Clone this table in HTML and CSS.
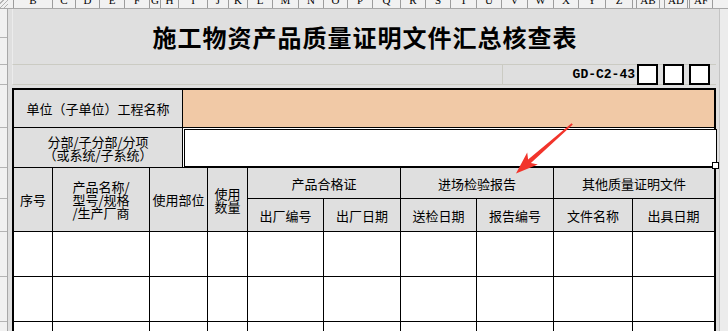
FILE: index.html
```html
<!DOCTYPE html>
<html lang="zh-CN">
<head>
<meta charset="utf-8">
<title>施工物资产品质量证明文件汇总核查表</title>
<link rel="stylesheet" href="styles.css">
</head>
<body>
<div class="colhead">
  <div class="corner"></div>
  <div class="ch"><span>B</span></div>
  <div class="ch"><span>C</span></div>
  <div class="ch"><span>D</span></div>
  <div class="ch"><span>E</span></div>
  <div class="ch"><span>F</span></div>
  <div class="ch"><span>G</span></div>
  <div class="ch"><span>H</span></div>
  <div class="ch"><span>I</span></div>
  <div class="ch"><span>J</span></div>
  <div class="ch"><span>K</span></div>
  <div class="ch"><span>L</span></div>
  <div class="ch"><span>M</span></div>
  <div class="ch"><span>N</span></div>
  <div class="ch"><span>O</span></div>
  <div class="ch"><span>P</span></div>
  <div class="ch"><span>Q</span></div>
  <div class="ch"><span>R</span></div>
  <div class="ch"><span>S</span></div>
  <div class="ch"><span>T</span></div>
  <div class="ch"><span>U</span></div>
  <div class="ch"><span>V</span></div>
  <div class="ch"><span>W</span></div>
  <div class="ch"><span>X</span></div>
  <div class="ch"><span>Y</span></div>
  <div class="ch"><span>Z</span></div>
  <div class="ch"></div>
  <div class="ch"><span>AB</span></div>
  <div class="ch"></div>
  <div class="ch"><span>AD</span></div>
  <div class="ch"></div>
  <div class="ch"><span>AF</span></div>
  <div class="ch last"></div>
</div>

<div class="main">
  <div class="rowhead">
    <div class="rh h29"></div>
    <div class="rh h27"></div>
    <div class="rh h20"></div>
    <div class="rh h43"></div>
    <div class="rh h40"></div>
    <div class="rh h31"></div>
    <div class="rh h33"></div>
    <div class="rh h45"></div>
    <div class="rh h45"></div>
    <div class="rh rest"></div>
  </div>

  <div class="sheet">
    <div class="title-row">
      <h1 class="title">施工物资产品质量证明文件汇总核查表</h1>
    </div>
    <div class="code-row">
      <div class="code-blank"></div>
      <div class="code">GD-C2-43</div>
      <div class="box"></div>
      <div class="box"></div>
      <div class="box"></div>
    </div>

    <div class="form">
      <div class="c hd s3">单位（子单位）工程名称</div>
      <div class="c fill s8 end"></div>

      <div class="c hd s3">分部/子分部/分项<br>（或系统/子系统）</div>
      <div class="c s8 end"><div class="sel"></div></div>

      <div class="c hd rs2">序号</div>
      <div class="c hd rs2">产品名称/<br>型号/规格<br>/生产厂商</div>
      <div class="c hd s2 rs2">使用部位</div>
      <div class="c hd rs2">使用<br>数量</div>
      <div class="c hd s2">产品合格证</div>
      <div class="c hd s2">进场检验报告</div>
      <div class="c hd s2 end">其他质量证明文件</div>

      <div class="c hd">出厂编号</div>
      <div class="c hd">出厂日期</div>
      <div class="c hd">送检日期</div>
      <div class="c hd">报告编号</div>
      <div class="c hd">文件名称</div>
      <div class="c hd end">出具日期</div>

      <div class="c"></div><div class="c"></div><div class="c s2"></div><div class="c"></div><div class="c"></div><div class="c"></div><div class="c"></div><div class="c"></div><div class="c"></div><div class="c end"></div>
      <div class="c"></div><div class="c"></div><div class="c s2"></div><div class="c"></div><div class="c"></div><div class="c"></div><div class="c"></div><div class="c"></div><div class="c"></div><div class="c end"></div>
      <div class="c short"></div><div class="c short"></div><div class="c s2 short"></div><div class="c short"></div><div class="c short"></div><div class="c short"></div><div class="c short"></div><div class="c short"></div><div class="c short"></div><div class="c end short"></div>
    </div>
  </div>

  <div class="vscroll"></div>
</div>

<svg class="arrow" width="728" height="331" viewBox="0 0 728 331" aria-hidden="true">
  <polygon points="572.8,124.6 530.9,162.9 537.8,164.5 516,173.5 527.2,152.5 528.1,159.5 571.6,123.2" fill="#f2342b"/>
</svg>
</body>
</html>
```

FILE: styles.css
```css
* {
  box-sizing: border-box;
}

html, body {
  margin: 0;
  padding: 0;
}

body {
  width: 728px;
  height: 331px;
  overflow: hidden;
  position: relative;
  background: #dfdfdf;
  color: #000;
  font-family: "Noto Sans CJK SC", "Noto Sans", sans-serif;
}

/* ---------- column header strip ---------- */
.colhead {
  display: grid;
  grid-template-columns: 14px 39px 23px 24px 25px 25px 11px 18px 29px 21px 19px 25px 26px 25px 24px 25px 28px 25px 25px 26px 25px 26px 26px 25px 27px 27px 4px 23px 5px 23px 2px 23px 1fr;
  height: 9px;
  background: #f1f1f1;
  border-bottom: 1px solid #a8a8a8;
}

.corner {
  border-right: 1px solid #9c9c9c;
  background:
    repeating-linear-gradient(135deg, #f1f1f1 0 2px, #b4b4b4 2px 3px) left top / 8px 8px no-repeat,
    #f1f1f1;
}

.ch {
  border-right: 1px solid #9c9c9c;
  overflow: hidden;
  text-align: center;
  font-family: "Liberation Serif", serif;
  font-size: 11px;
}

.ch span {
  display: block;
  line-height: 11px;
  margin-top: -5px;
}

.ch.last {
  border-right: 0;
}

/* ---------- main area ---------- */
.main {
  display: flex;
  height: 322px;
}

.rowhead {
  width: 8px;
  flex: none;
  display: flex;
  flex-direction: column;
  background: #f1f1f1;
  border-right: 1px solid #a8a8a8;
}

.rh {
  flex: none;
  border-bottom: 1px solid #b4b4b4;
}

.h29 { height: 29px; }
.h27 { height: 27px; }
.h20 { height: 20px; }
.h43 { height: 43px; }
.h40 { height: 40px; }
.h31 { height: 31px; }
.h33 { height: 33px; }
.h45 { height: 45px; }
.rh.rest { flex: 1; border-bottom: 0; }

.sheet {
  width: 704px;
  flex: none;
  margin-left: 4px;
  display: flex;
  flex-direction: column;
}

.title-row {
  height: 56px;
  flex: none;
  display: flex;
  align-items: center;
  justify-content: center;
  border-left: 1px solid #ececec;
  border-bottom: 1px solid #cbcbc3;
}

.title {
  margin: 0;
  font-size: 24px;
  line-height: 28px;
  font-weight: 700;
  letter-spacing: 1px;
  padding-left: 1px;
  color: #000;
}

.code-row {
  height: 20px;
  flex: none;
  display: flex;
  align-items: flex-start;
  border-left: 1px solid #ececec;
  border-bottom: 1px solid #cbcbc3;
}

.code-blank {
  width: 490px;
  height: 19px;
  flex: none;
  border-right: 1px solid #cbcbc3;
}

.code {
  width: 134px;
  height: 19px;
  flex: none;
  padding-right: 2px;
  text-align: right;
  font-family: "Liberation Mono", monospace;
  font-weight: 700;
  font-size: 13px;
  line-height: 19px;
}

.box {
  width: 21px;
  height: 21px;
  margin-top: -1px;
  margin-right: 5px;
  flex: none;
  background: #fff;
  border: 2px solid #000;
}

/* ---------- form ---------- */
.form {
  margin-top: 3px;
  width: 704px;
  flex: none;
  display: grid;
  grid-template-columns: 39px 97px 33px 25px 40px 76px 77px 76px 77px 79px 81px;
  grid-template-rows: 38px 40px 31px 33px 45px 45px 10px;
  border: 2px solid #000;
  border-bottom: 0;
}

.c {
  position: relative;
  display: flex;
  align-items: center;
  justify-content: center;
  text-align: center;
  background: #fff;
  border-right: 1px solid #000;
  border-bottom: 1px solid #000;
  font-size: 13px;
  line-height: 13px;
}

.c.short { border-bottom: 0; }
.c.hd { background: #dfdfdf; }
.c.fill { background: #f1c9a6; }
.c.end { border-right: 0; }
.s2 { grid-column: span 2; }
.s3 { grid-column: span 3; }
.s8 { grid-column: span 8; }
.rs2 { grid-row: span 2; }

.sel {
  position: absolute;
  top: 1px;
  left: 1px;
  right: -3px;
  bottom: 0;
  background: #fff;
  border: 1px solid #000;
  z-index: 1;
}

.sel::after {
  content: "";
  position: absolute;
  right: -3px;
  bottom: -3px;
  width: 5px;
  height: 5px;
  background: #fff;
  border: 1px solid #000;
}

/* ---------- right scroll edge ---------- */
.vscroll {
  width: 9px;
  flex: none;
  margin-left: 3px;
  background: #ececec;
  border-left: 1px solid #c4c4c4;
}

/* ---------- annotation arrow ---------- */
.arrow {
  position: absolute;
  left: 0;
  top: 0;
  pointer-events: none;
  z-index: 2;
}
```
